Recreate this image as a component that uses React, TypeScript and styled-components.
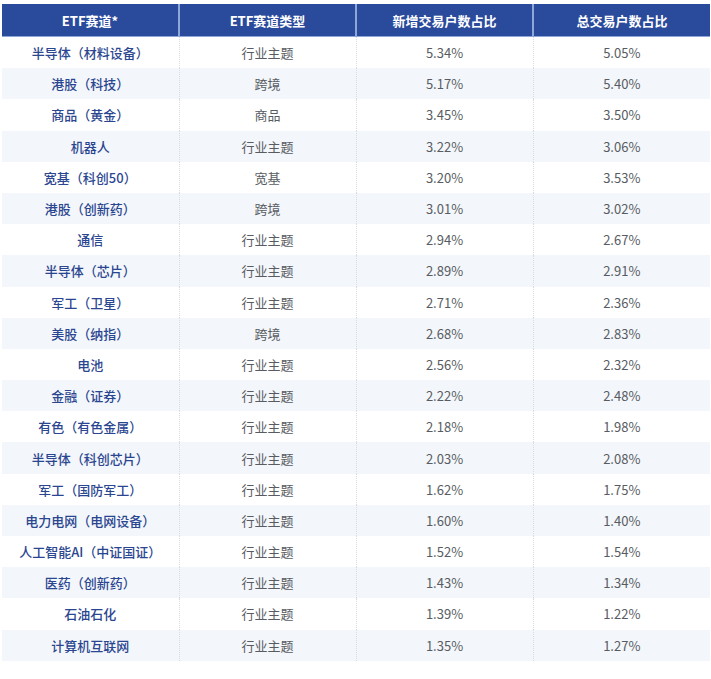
import React from 'react';
import styled, { createGlobalStyle } from 'styled-components';

const GlobalStyle = createGlobalStyle`
  html, body {
    margin: 0;
    padding: 0;
    background: #ffffff;
  }
  body {
    font-family: "Noto Sans CJK SC", "Noto Sans", "Open Sans", sans-serif;
  }
`;

type Row = {
  track: string;
  kind: string;
  newShare: string;
  totalShare: string;
};

const rows: Row[] = [
  { track: '半导体（材料设备）', kind: '行业主题', newShare: '5.34%', totalShare: '5.05%' },
  { track: '港股（科技）', kind: '跨境', newShare: '5.17%', totalShare: '5.40%' },
  { track: '商品（黄金）', kind: '商品', newShare: '3.45%', totalShare: '3.50%' },
  { track: '机器人', kind: '行业主题', newShare: '3.22%', totalShare: '3.06%' },
  { track: '宽基（科创50）', kind: '宽基', newShare: '3.20%', totalShare: '3.53%' },
  { track: '港股（创新药）', kind: '跨境', newShare: '3.01%', totalShare: '3.02%' },
  { track: '通信', kind: '行业主题', newShare: '2.94%', totalShare: '2.67%' },
  { track: '半导体（芯片）', kind: '行业主题', newShare: '2.89%', totalShare: '2.91%' },
  { track: '军工（卫星）', kind: '行业主题', newShare: '2.71%', totalShare: '2.36%' },
  { track: '美股（纳指）', kind: '跨境', newShare: '2.68%', totalShare: '2.83%' },
  { track: '电池', kind: '行业主题', newShare: '2.56%', totalShare: '2.32%' },
  { track: '金融（证券）', kind: '行业主题', newShare: '2.22%', totalShare: '2.48%' },
  { track: '有色（有色金属）', kind: '行业主题', newShare: '2.18%', totalShare: '1.98%' },
  { track: '半导体（科创芯片）', kind: '行业主题', newShare: '2.03%', totalShare: '2.08%' },
  { track: '军工（国防军工）', kind: '行业主题', newShare: '1.62%', totalShare: '1.75%' },
  { track: '电力电网（电网设备）', kind: '行业主题', newShare: '1.60%', totalShare: '1.40%' },
  { track: '人工智能AI（中证国证）', kind: '行业主题', newShare: '1.52%', totalShare: '1.54%' },
  { track: '医药（创新药）', kind: '行业主题', newShare: '1.43%', totalShare: '1.34%' },
  { track: '石油石化', kind: '行业主题', newShare: '1.39%', totalShare: '1.22%' },
  { track: '计算机互联网', kind: '行业主题', newShare: '1.35%', totalShare: '1.27%' },
];

const Page = styled.div`
  padding: 4px 1px 0 2px;
`;

const Table = styled.table`
  width: 708px;
  border-collapse: collapse;
  table-layout: fixed;
  font-size: 13px;
`;

const HeadCell = styled.th`
  height: 32px;
  padding: 0;
  background: #2a4a9c;
  color: #ffffff;
  font-weight: 700;
  font-size: 13px;
  text-align: center;
  border-bottom: 1px solid #8ea6d8;
  & + & {
    border-left: 2px solid #8ea6d8;
  }
`;

const BodyRow = styled.tr<{ $striped: boolean }>`
  background: ${(p) => (p.$striped ? '#f3f6fa' : '#ffffff')};
`;

const Cell = styled.td<{ $accent?: boolean }>`
  height: 31.2px;
  padding: 0;
  text-align: center;
  color: ${(p) => (p.$accent ? '#2b4690' : '#585c62')};
  font-weight: ${(p) => (p.$accent ? 500 : 400)};
  & + & {
    border-left: 1px dotted #d8dde4;
  }
`;

const App = () => (
  <Page>
    <GlobalStyle />
    <Table>
      <thead>
        <tr>
          <HeadCell>ETF赛道*</HeadCell>
          <HeadCell>ETF赛道类型</HeadCell>
          <HeadCell>新增交易户数占比</HeadCell>
          <HeadCell>总交易户数占比</HeadCell>
        </tr>
      </thead>
      <tbody>
        {rows.map((row, i) => (
          <BodyRow key={row.track} $striped={i % 2 === 1}>
            <Cell $accent>{row.track}</Cell>
            <Cell>{row.kind}</Cell>
            <Cell>{row.newShare}</Cell>
            <Cell>{row.totalShare}</Cell>
          </BodyRow>
        ))}
      </tbody>
    </Table>
  </Page>
);

export default App;
